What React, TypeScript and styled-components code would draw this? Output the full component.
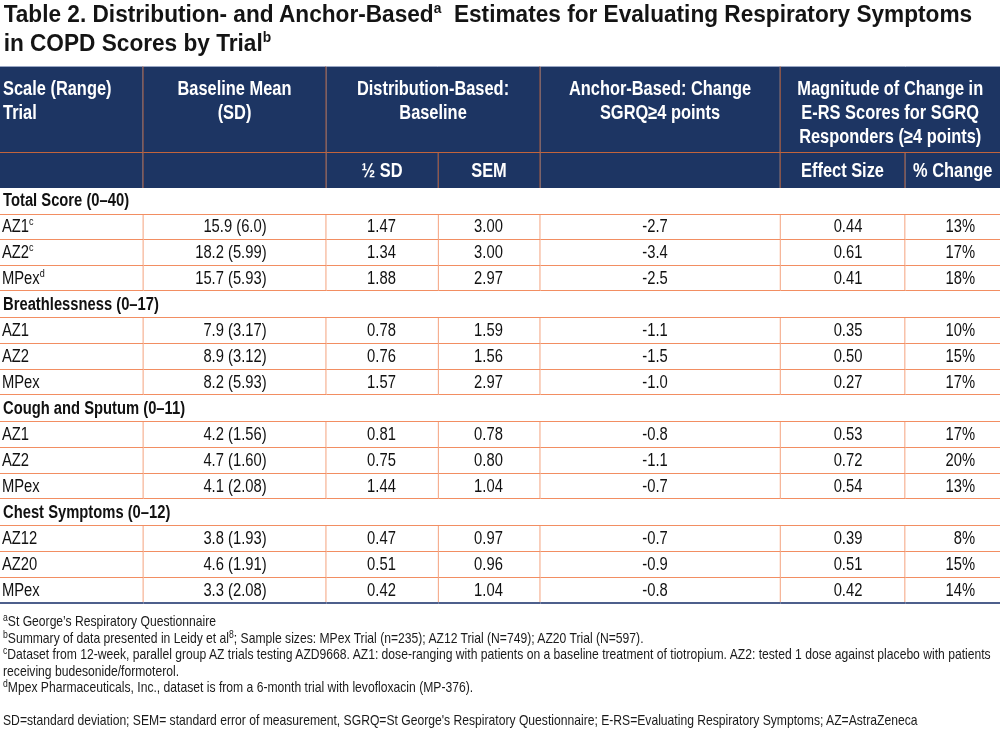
import React from "react";
import styled, { createGlobalStyle } from "styled-components";

// No Arial Narrow installed: lay out with Liberation Sans (Arial metrics) at
// 1/0.82 width and squeeze the whole sheet horizontally to the narrow width.
const SQUEEZE = 0.82;
const SANS = '"Liberation Sans", Arial, sans-serif';
const w = (px: number) => Math.round((px / SQUEEZE) * 10) / 10;

const ORANGE = "#f28e62";

const GlobalStyle = createGlobalStyle`
  html, body {
    margin: 0;
    padding: 0;
    background: #ffffff;
    overflow: hidden;
  }
  body {
    font-family: ${SANS};
    color: #111;
  }
`;

const Viewport = styled.div`
  width: 1000px;
  height: 736px;
  overflow: hidden;
`;

const Sheet = styled.div`
  width: ${w(1000)}px;
  display: flex;
  flex-direction: column;
  transform: scaleX(${SQUEEZE});
  transform-origin: 0 0;
`;

// the title face is a little wider than the table face
const Title = styled.h1`
  margin: 0;
  padding: 0 0 0 ${w(3)}px;
  height: 66px;
  font-family: ${SANS};
  font-weight: 700;
  font-size: 23px;
  line-height: 29px;
  color: #141414;
  white-space: nowrap;
  transform: scaleX(1.2);
  transform-origin: 0 0;

  sup {
    font-size: 14px;
    line-height: 0;
    vertical-align: 9px;
  }
`;

const Table = styled.table`
  width: ${w(1000)}px;
  border-collapse: collapse;
  table-layout: fixed;
  font-family: ${SANS};
`;

const HeadRow = styled.tr`
  &:first-child th {
    border-top: 1px solid #9aa7c4;
  }
  &:last-child th {
    border-bottom: none;
  }
`;

const HeadCell = styled.th<{ $tall?: boolean; $align?: "left" | "center" }>`
  background: #1d3563;
  color: #ffffff;
  font-weight: 700;
  font-size: 20px;
  line-height: 24px;
  white-space: nowrap;
  text-align: ${(p) => p.$align || "center"};
  vertical-align: ${(p) => (p.$tall ? "top" : "middle")};
  height: ${(p) => (p.$tall ? "86px" : "35px")};
  padding: ${(p) => (p.$tall ? `9px ${w(3)}px 0` : `0 ${w(3)}px`)};
  border-left: ${w(1.2)}px solid #c2643c;
  border-right: ${w(1.2)}px solid #c2643c;
  border-bottom: 1px solid #c2643c;
  box-sizing: border-box;

  &:first-child {
    border-left: none;
  }
  &:last-child {
    border-right: none;
  }
`;

const GroupCell = styled.td`
  font-weight: 700;
  font-size: 18px;
  height: 26px;
  padding: 0 ${w(3)}px;
  border-bottom: 1px solid ${ORANGE};
  white-space: nowrap;
`;

const BodyRow = styled.tr<{ $last?: boolean }>`
  td {
    border-bottom: ${(p) => (p.$last ? "2px solid #4d5f8c" : `1px solid ${ORANGE}`)};
  }
`;

const Cell = styled.td<{ $align?: "left" | "center" | "right"; $pr?: number; $pl?: number }>`
  font-size: 18px;
  height: 24.67px;
  padding: 0 ${(p) => w(p.$pr ?? 3)}px 0 ${(p) => w(p.$pl ?? 2)}px;
  text-align: ${(p) => p.$align || "center"};
  border-left: ${w(1.3)}px solid ${ORANGE};
  white-space: nowrap;

  &:first-child {
    border-left: none;
  }

  sup {
    font-size: 11px;
    line-height: 0;
    vertical-align: 7px;
  }
`;

const Notes = styled.div`
  padding: 9px 0 0 ${w(3)}px;
  font-family: ${SANS};
  font-size: 14.8px;
  line-height: 16.5px;
  color: #1a1a1a;
  white-space: nowrap;

  p {
    margin: 0;
  }
  sup {
    font-size: 10.5px;
    line-height: 0;
    vertical-align: 5px;
  }
`;

const Gap = styled.div`
  height: 16.5px;
`;

type Row = { trial: string; note?: string; mean: string; half: string; sem: string; anchor: string; effect: string; pct: string };
type Group = { name: string; rows: Row[] };

const groups: Group[] = [
  {
    name: "Total Score (0–40)",
    rows: [
      { trial: "AZ1", note: "c", mean: "15.9 (6.0)", half: "1.47", sem: "3.00", anchor: "-2.7", effect: "0.44", pct: "13%" },
      { trial: "AZ2", note: "c", mean: "18.2 (5.99)", half: "1.34", sem: "3.00", anchor: "-3.4", effect: "0.61", pct: "17%" },
      { trial: "MPex", note: "d", mean: "15.7 (5.93)", half: "1.88", sem: "2.97", anchor: "-2.5", effect: "0.41", pct: "18%" },
    ],
  },
  {
    name: "Breathlessness (0–17)",
    rows: [
      { trial: "AZ1", mean: "7.9 (3.17)", half: "0.78", sem: "1.59", anchor: "-1.1", effect: "0.35", pct: "10%" },
      { trial: "AZ2", mean: "8.9 (3.12)", half: "0.76", sem: "1.56", anchor: "-1.5", effect: "0.50", pct: "15%" },
      { trial: "MPex", mean: "8.2 (5.93)", half: "1.57", sem: "2.97", anchor: "-1.0", effect: "0.27", pct: "17%" },
    ],
  },
  {
    name: "Cough and Sputum (0–11)",
    rows: [
      { trial: "AZ1", mean: "4.2 (1.56)", half: "0.81", sem: "0.78", anchor: "-0.8", effect: "0.53", pct: "17%" },
      { trial: "AZ2", mean: "4.7 (1.60)", half: "0.75", sem: "0.80", anchor: "-1.1", effect: "0.72", pct: "20%" },
      { trial: "MPex", mean: "4.1 (2.08)", half: "1.44", sem: "1.04", anchor: "-0.7", effect: "0.54", pct: "13%" },
    ],
  },
  {
    name: "Chest Symptoms (0–12)",
    rows: [
      { trial: "AZ12", mean: "3.8 (1.93)", half: "0.47", sem: "0.97", anchor: "-0.7", effect: "0.39", pct: "8%" },
      { trial: "AZ20", mean: "4.6 (1.91)", half: "0.51", sem: "0.96", anchor: "-0.9", effect: "0.51", pct: "15%" },
      { trial: "MPex", mean: "3.3 (2.08)", half: "0.42", sem: "1.04", anchor: "-0.8", effect: "0.42", pct: "14%" },
    ],
  },
];

const colWidths = [143, 183, 112, 102, 240, 125, 95];

const App = () => {
  return (
    <>
      <GlobalStyle />
      <Viewport>
        <Sheet>
          <Title>
            Table 2. Distribution- and Anchor-Based<sup>a</sup>&nbsp; Estimates for Evaluating Respiratory Symptoms
            <br />
            in COPD Scores by Trial<sup>b</sup>
          </Title>
          <Table>
            <colgroup>
              {colWidths.map((c, i) => (
                <col key={i} style={{ width: w(c) }} />
              ))}
            </colgroup>
            <thead>
              <HeadRow>
                <HeadCell $tall $align="left">
                  Scale (Range)
                  <br />
                  Trial
                </HeadCell>
                <HeadCell $tall>
                  Baseline Mean
                  <br />
                  (SD)
                </HeadCell>
                <HeadCell $tall colSpan={2}>
                  Distribution-Based:
                  <br />
                  Baseline
                </HeadCell>
                <HeadCell $tall>
                  Anchor-Based: Change
                  <br />
                  SGRQ≥4 points
                </HeadCell>
                <HeadCell $tall colSpan={2}>
                  Magnitude of Change in
                  <br />
                  E-RS Scores for SGRQ
                  <br />
                  Responders (≥4 points)
                </HeadCell>
              </HeadRow>
              <HeadRow>
                <HeadCell />
                <HeadCell />
                <HeadCell>½ SD</HeadCell>
                <HeadCell>SEM</HeadCell>
                <HeadCell />
                <HeadCell>Effect Size</HeadCell>
                <HeadCell>% Change</HeadCell>
              </HeadRow>
            </thead>
            <tbody>
              {groups.map((g, gi) => (
                <React.Fragment key={g.name}>
                  <tr>
                    <GroupCell colSpan={7}>{g.name}</GroupCell>
                  </tr>
                  {g.rows.map((r, ri) => (
                    <BodyRow key={r.trial + ri} $last={gi === groups.length - 1 && ri === g.rows.length - 1}>
                      <Cell $align="left">
                        {r.trial}
                        {r.note && <sup>{r.note}</sup>}
                      </Cell>
                      <Cell $align="right" $pr={59}>
                        {r.mean}
                      </Cell>
                      <Cell>{r.half}</Cell>
                      <Cell>{r.sem}</Cell>
                      <Cell $pr={12}>{r.anchor}</Cell>
                      <Cell $pl={14}>{r.effect}</Cell>
                      <Cell $align="right" $pr={25}>
                        {r.pct}
                      </Cell>
                    </BodyRow>
                  ))}
                </React.Fragment>
              ))}
            </tbody>
          </Table>
          <Notes>
            <p>
              <sup>a</sup>St George’s Respiratory Questionnaire
            </p>
            <p>
              <sup>b</sup>Summary of data presented in Leidy et al<sup>8</sup>; Sample sizes: MPex Trial (n=235); AZ12 Trial (N=749); AZ20 Trial (N=597).
            </p>
            <p>
              <sup>c</sup>Dataset from 12-week, parallel group AZ trials testing AZD9668. AZ1: dose-ranging with patients on a baseline treatment of tiotropium. AZ2: tested 1 dose against placebo with patients
              <br />
              receiving budesonide/formoterol.
            </p>
            <p>
              <sup>d</sup>Mpex Pharmaceuticals, Inc., dataset is from a 6-month trial with levofloxacin (MP-376).
            </p>
            <Gap />
            <p>SD=standard deviation; SEM= standard error of measurement, SGRQ=St George's Respiratory Questionnaire; E-RS=Evaluating Respiratory Symptoms; AZ=AstraZeneca</p>
          </Notes>
        </Sheet>
      </Viewport>
    </>
  );
};

export default App;
